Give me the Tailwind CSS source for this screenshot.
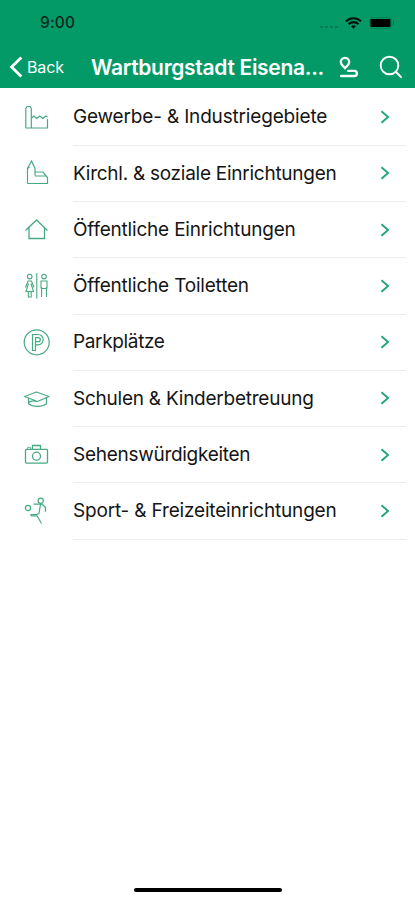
<!DOCTYPE html>
<html lang="de">
<head>
<meta charset="utf-8">
<meta name="viewport" content="width=device-width, initial-scale=1">
<title>Wartburgstadt Eisenach</title>
<script src="https://cdn.jsdelivr.net/npm/@tailwindcss/browser@4"></script>
</head>
<body class="bg-white font-['Inter','Liberation_Sans',sans-serif]">
<div class="flex h-[900px] w-[415px] flex-col overflow-hidden bg-white">
  <header class="h-[88px] shrink-0 bg-[#039a67] text-white">
    <div class="flex h-[46px] items-center pl-10 pr-5 text-[#06291c]">
      <span class="text-[15.5px] font-medium leading-none tracking-[0.15px]">9:00</span>
      <div class="ml-auto flex items-center">
        <svg class="mr-[6px] mt-[7px] h-[4px] w-[19px]" viewBox="0 0 19 4" fill="#087b54"><rect x="0" y="1" width="3" height="2"/><rect x="5" y="1" width="3" height="2"/><rect x="10" y="1" width="3" height="2"/><rect x="15" y="1" width="3" height="2"/></svg>
        <svg class="mr-[7px] h-[12px] w-[17px]" viewBox="0 0 17 12" fill="none" stroke="#04120c" stroke-width="2.2"><path d="M1 4.300C5.200.2 11.800.2 16 4.300M3.500 7.200c2.900-2.800 7.100-2.800 10 0"/><path d="M8.500 11.800 6 9.300c1.400-1.300 3.600-1.300 5 0z" fill="#04120c" stroke="none"/></svg>
        <svg class="h-[12px] w-[26px]" viewBox="0 0 26 12"><rect x=".7" y=".7" width="22" height="10.6" rx="2.500" fill="none" stroke="#067f54"/><rect x="1.500" y="2" width="20" height="8" rx="1" fill="#000"/><path d="M24 4c1.600.8 1.600 3.200 0 4z" fill="#06613f"/></svg>
      </div>
    </div>
    <div class="flex h-[42px] items-center pl-[9px]">
      <svg class="h-[22px] w-[14px] shrink-0" viewBox="0 0 14 22" fill="none" stroke="currentColor" stroke-width="2.800"><path d="M12.300 1.500 2.600 11l9.700 9.500"/></svg>
      <span class="ml-[4px] w-[64px] text-[16px] leading-none tracking-[-0.1px]">Back</span>
      <span class="w-[240px] whitespace-nowrap text-[21px] font-semibold leading-none tracking-[-0.3px]">Wartburgstadt Eisena...</span>
      <svg class="ml-[7px] mt-[2px] h-[24px] w-[22px] shrink-0" viewBox="0 0 22 24" fill="none" stroke="currentColor" stroke-width="2.300" stroke-linecap="round" stroke-linejoin="round"><path d="M7 12.300C5.600 10.500 2.800 8.600 2.800 6a4.200 4.200 0 0 1 8.400 0c0 2.600-2.800 4.500-4.200 6.300z"/><path d="M10 14.800h6.300a2.600 2.600 0 0 1 0 5.200H3"/></svg>
      <svg class="ml-[19px] h-[24px] w-[24px] shrink-0" viewBox="0 0 24 24" fill="none" stroke="currentColor" stroke-width="1.900" stroke-linecap="round"><circle cx="10.500" cy="10.500" r="8.800"/><path d="m17 17 5 5"/></svg>
    </div>
  </header>

  <main class="flex flex-col pt-[1.500px] text-[19px] tracking-[-0.200px] text-[#151515]">
    <div class="flex h-[56.250px] items-center pl-[23px] pr-[9px]">
      <svg class="h-7 w-7 shrink-0" viewBox="0 0 28 28" fill="none" stroke="#48aa82" stroke-width="1.200"><path d="M2.800 24V4.500L4 2.500h3L8.300 4.500V24M8.300 14.500l2.500-2.500 3 2.500 3-2.500 3 2.500 3-2.500 1.700 1M24.500 15v9H2.500M8.300 14v3"/></svg>
      <div class="ml-[22px] flex h-full grow items-center border-b border-[#ededed]"><span class="whitespace-nowrap pt-px tracking-[-0.170px]">Gewerbe- &amp; Industriegebiete</span><svg class="ml-auto mr-[15px] h-[14px] w-[12px]" viewBox="0 0 12 14" fill="none" stroke="#22a676" stroke-width="1.900"><path d="m2.500 1.200 6.500 5.800-6.500 5.800"/></svg></div>
    </div>
    <div class="flex h-[56.250px] items-center pl-[23px] pr-[9px]">
      <svg class="h-7 w-7 shrink-0" viewBox="0 0 28 28" fill="none" stroke="#48aa82" stroke-width="1.200"><path d="M4.500 23.500V8.500L8.500 1l3.500 7.500v7M4.500 8.500 6.500 7M12 12h8l4.500 5.500v6h-20M12 16h11"/></svg>
      <div class="ml-[22px] flex h-full grow items-center border-b border-[#ededed]"><span class="whitespace-nowrap pt-px tracking-[-0.260px]">Kirchl. &amp; soziale Einrichtungen</span><svg class="ml-auto mr-[15px] h-[14px] w-[12px]" viewBox="0 0 12 14" fill="none" stroke="#22a676" stroke-width="1.900"><path d="m2.500 1.200 6.500 5.800-6.500 5.800"/></svg></div>
    </div>
    <div class="flex h-[56.250px] items-center pl-[23px] pr-[9px]">
      <svg class="h-7 w-7 shrink-0" viewBox="0 0 28 28" fill="none" stroke="#48aa82" stroke-width="1.300"><path d="M2.500 14.500 13.500 4l11 10.500M6 11.500v11h15.500v-11"/></svg>
      <div class="ml-[22px] flex h-full grow items-center border-b border-[#ededed]"><span class="whitespace-nowrap pt-px">Öffentliche Einrichtungen</span><svg class="ml-auto mr-[15px] h-[14px] w-[12px]" viewBox="0 0 12 14" fill="none" stroke="#22a676" stroke-width="1.900"><path d="m2.500 1.200 6.500 5.800-6.500 5.800"/></svg></div>
    </div>
    <div class="flex h-[56.250px] items-center pl-[23px] pr-[9px]">
      <svg class="h-7 w-7 shrink-0" viewBox="0 0 28 28" fill="none" stroke="#48aa82" stroke-width="1.100"><circle cx="6.700" cy="4.600" r="2.300"/><path d="M2.500 15.500 5 9h3.500l2.500 6.500M5.500 11.500l-2.500 8h7.500l-2.500-8M5.300 19.500V25h2.900v-5.500"/><path d="M13.800 1v25.500"/><circle cx="21" cy="4.600" r="2.300"/><path d="M18 16.500V9h6v7.500M18.600 15v10M23.500 15v10M21 17v0M18.600 16.500h4.900"/></svg>
      <div class="ml-[22px] flex h-full grow items-center border-b border-[#ededed]"><span class="whitespace-nowrap pt-px">Öffentliche Toiletten</span><svg class="ml-auto mr-[15px] h-[14px] w-[12px]" viewBox="0 0 12 14" fill="none" stroke="#22a676" stroke-width="1.900"><path d="m2.500 1.200 6.500 5.800-6.500 5.800"/></svg></div>
    </div>
    <div class="flex h-[56.250px] items-center pl-[23px] pr-[9px]">
      <svg class="h-7 w-7 shrink-0" viewBox="0 0 28 28" fill="none" stroke="#48aa82" stroke-width="1.200"><circle cx="13.700" cy="13.300" r="12.500"/><path d="M9.500 21.500V5.500h5.500a5.200 5.200 0 0 1 0 10.400H12.500v5.600zM12.500 16V8.700h2.800a2 2 0 0 1 0 4h-2.800"/></svg>
      <div class="ml-[22px] flex h-full grow items-center border-b border-[#ededed]"><span class="whitespace-nowrap pt-px tracking-[-0.350px]">Parkplätze</span><svg class="ml-auto mr-[15px] h-[14px] w-[12px]" viewBox="0 0 12 14" fill="none" stroke="#22a676" stroke-width="1.900"><path d="m2.500 1.200 6.500 5.800-6.500 5.800"/></svg></div>
    </div>
    <div class="flex h-[56.250px] items-center pl-[23px] pr-[9px]">
      <svg class="h-7 w-7 shrink-0" viewBox="0 0 28 28" fill="none" stroke="#48aa82" stroke-width="1.200" stroke-linejoin="round"><path d="m1.500 11.500 12-4.500 12.500 4.500-11.500 5zM5.500 13.500v5.300c4.500 3.500 13.500 3.500 18 0v-6M5.500 18.800c0-3.500 5-3 9-2.300"/></svg>
      <div class="ml-[22px] flex h-full grow items-center border-b border-[#ededed]"><span class="whitespace-nowrap pt-px tracking-[-0.240px]">Schulen &amp; Kinderbetreuung</span><svg class="ml-auto mr-[15px] h-[14px] w-[12px]" viewBox="0 0 12 14" fill="none" stroke="#22a676" stroke-width="1.900"><path d="m2.500 1.200 6.500 5.800-6.500 5.800"/></svg></div>
    </div>
    <div class="flex h-[56.250px] items-center pl-[23px] pr-[9px]">
      <svg class="h-7 w-7 shrink-0" viewBox="0 0 28 28" fill="none" stroke="#48aa82" stroke-width="1.300"><rect x="2.500" y="8.300" width="22" height="13.800" rx="1"/><path d="M9.500 8.300V4.500h8v3.800"/><path d="M4.500 8V6.300h3V8" stroke-width=".8"/><circle cx="13.500" cy="15.200" r="4"/></svg>
      <div class="ml-[22px] flex h-full grow items-center border-b border-[#ededed]"><span class="whitespace-nowrap pt-px tracking-[-0.280px]">Sehenswürdigkeiten</span><svg class="ml-auto mr-[15px] h-[14px] w-[12px]" viewBox="0 0 12 14" fill="none" stroke="#22a676" stroke-width="1.900"><path d="m2.500 1.200 6.500 5.800-6.500 5.800"/></svg></div>
    </div>
    <div class="flex h-[56.250px] items-center pl-[23px] pr-[9px]">
      <svg class="h-7 w-7 shrink-0" viewBox="0 0 28 28" fill="none" stroke="#48aa82" stroke-width="1.200"><circle cx="17.700" cy="3.700" r="2.600"/><circle cx="5" cy="11" r="2.600"/><path d="M10.500 7.200h8.700l3.200 3v4.500M17.500 7.500l-1.500 8.700-2.500 1.600M7.500 17.500l1 1.300h5.500l4.500 7.700M7.500 17.500h6"/></svg>
      <div class="ml-[22px] flex h-full grow items-center border-b border-[#ededed]"><span class="whitespace-nowrap pt-px tracking-[-0.180px]">Sport- &amp; Freizeiteinrichtungen</span><svg class="ml-auto mr-[15px] h-[14px] w-[12px]" viewBox="0 0 12 14" fill="none" stroke="#22a676" stroke-width="1.900"><path d="m2.500 1.200 6.500 5.800-6.500 5.800"/></svg></div>
    </div>
  </main>

  <div class="mt-auto mb-[8px] ml-[134px] h-[4.500px] w-[148px] rounded-full bg-black"></div>
</div>
</body>
</html>
